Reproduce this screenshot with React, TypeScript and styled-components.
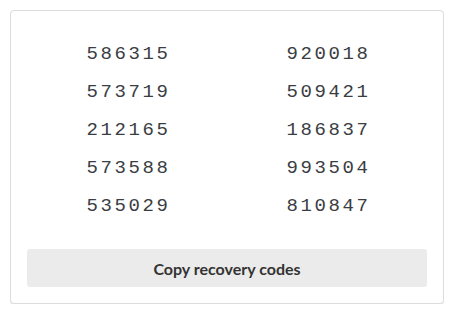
import React from "react";
import styled, { createGlobalStyle } from "styled-components";

const GlobalStyle = createGlobalStyle`
  body {
    margin: 10px;
    background: #ffffff;
    font-family: Lato, "Noto Sans", sans-serif;
  }
`;

const Card = styled.div`
  border: 1px solid #dcdcdc;
  border-radius: 4px;
  box-shadow: 0 1px 2px rgba(0, 0, 0, 0.12);
  background: #fff;
  padding: 24px 16px 16px;
  display: flex;
  flex-direction: column;
  gap: 24px;
`;

const CodeGrid = styled.div`
  display: grid;
  grid-template-columns: 1fr 1fr;
  grid-auto-rows: 38px;
`;

const Code = styled.span`
  display: flex;
  align-items: center;
  justify-content: center;
  padding-left: 3px;
  font-family: "Liberation Mono", "DejaVu Sans Mono", monospace;
  font-size: 19px;
  letter-spacing: 2.6px;
  color: #3a3d42;
`;

const CopyButton = styled.button`
  height: 38px;
  border: none;
  border-radius: 3px;
  background: #ebebeb;
  color: #333;
  font-family: Lato, "Noto Sans", sans-serif;
  font-size: 16px;
  font-weight: 700;
  cursor: pointer;
`;

const codes = [
  "586315",
  "920018",
  "573719",
  "509421",
  "212165",
  "186837",
  "573588",
  "993504",
  "535029",
  "810847",
];

export default function App() {
  return (
    <>
      <GlobalStyle />
      <Card>
        <CodeGrid>
          {codes.map((code) => (
            <Code key={code}>{code}</Code>
          ))}
        </CodeGrid>
        <CopyButton>Copy recovery codes</CopyButton>
      </Card>
    </>
  );
}
